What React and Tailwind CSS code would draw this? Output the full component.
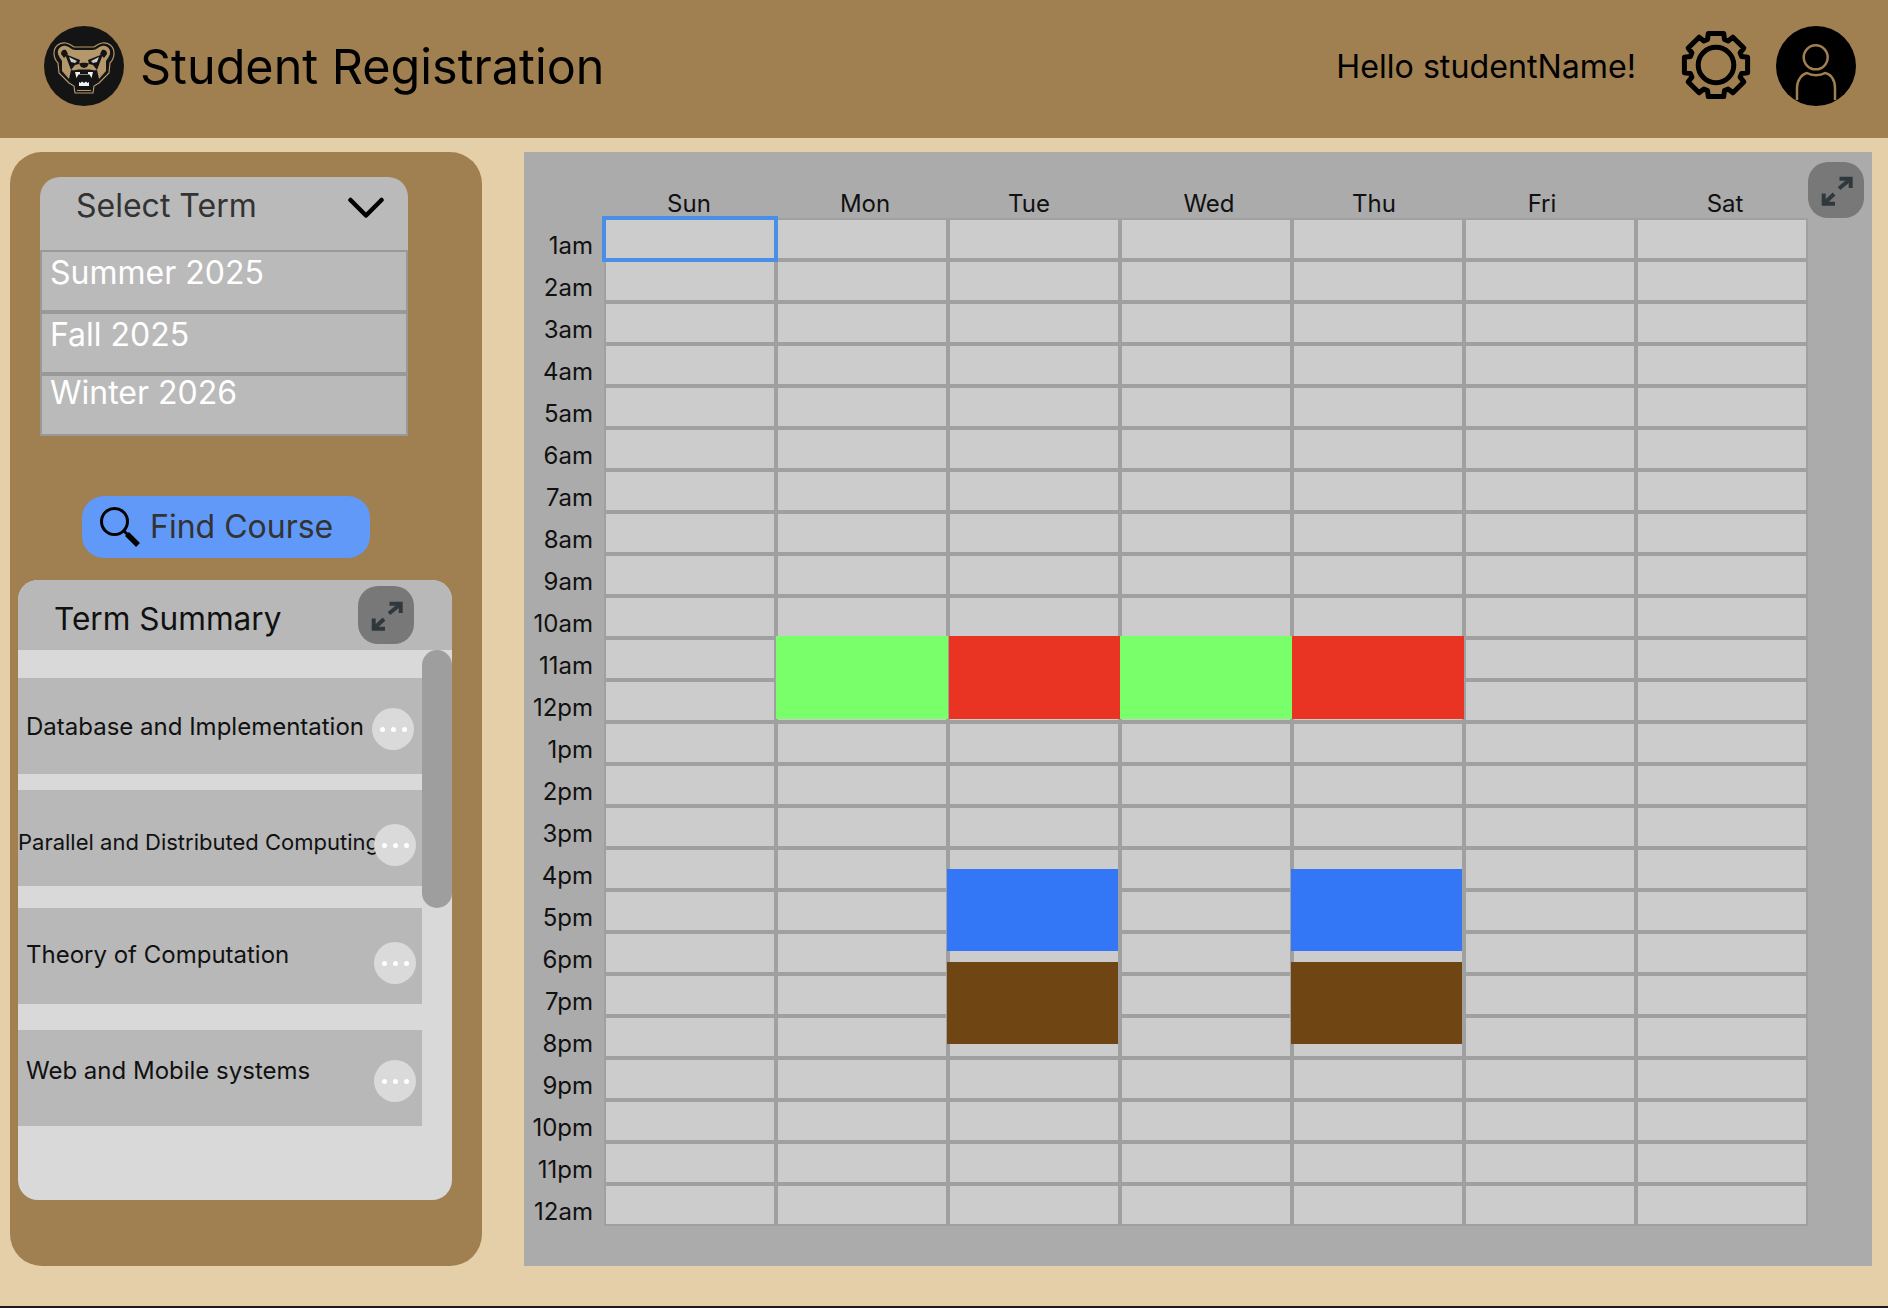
import React from 'react';

const days = [
  { name: 'Sun', cls: 'pr-[2px]' },
  { name: 'Mon', cls: 'pl-[6px]' },
  { name: 'Tue', cls: 'pr-[10px]' },
  { name: 'Wed', cls: 'pl-[6px]' },
  { name: 'Thu', cls: 'pr-[8px]' },
  { name: 'Fri', cls: 'pr-[16px]' },
  { name: 'Sat', cls: 'pl-[6px]' },
];

const hours = [
  '1am', '2am', '3am', '4am', '5am', '6am', '7am', '8am', '9am', '10am', '11am', '12pm',
  '1pm', '2pm', '3pm', '4pm', '5pm', '6pm', '7pm', '8pm', '9pm', '10pm', '11pm', '12am',
];

// scheduled classes sit on top of the grid
const events = [
  'left-[252px] top-[484px] w-[172px] h-[83px] bg-[#78ff6a]',
  'left-[425px] top-[484px] w-[171px] h-[83px] bg-[#ea3423]',
  'left-[596px] top-[484px] w-[172px] h-[83px] bg-[#78ff6a]',
  'left-[768px] top-[484px] w-[172px] h-[83px] bg-[#ea3423]',
  'left-[423px] top-[717px] w-[171px] h-[82px] bg-[#3377f7]',
  'left-[767px] top-[717px] w-[171px] h-[82px] bg-[#3377f7]',
  'left-[423px] top-[810px] w-[171px] h-[82px] bg-[#6f4613]',
  'left-[767px] top-[810px] w-[171px] h-[82px] bg-[#6f4613]',
];

const courses = [
  { name: 'Database and Implementation', row: 'pl-[8px] pr-[8px]', text: 'mt-[34px] text-[24px] leading-[30px]', dot: 'ml-auto mt-[30px]' },
  { name: 'Parallel and Distributed Computing', row: 'mt-[16px] pr-[6px]', text: 'mt-[38px] w-[359px] text-[22px] leading-[28px]', dot: '-ml-[3px] mt-[34px]' },
  { name: 'Theory of Computation', row: 'mt-[22px] pl-[8px] pr-[6px]', text: 'mt-[32px] text-[24px] leading-[30px]', dot: 'ml-auto mt-[34px]' },
  { name: 'Web and Mobile systems', row: 'mt-[26px] pl-[8px] pr-[6px]', text: 'mt-[26px] text-[24px] leading-[30px]', dot: 'ml-auto mt-[30px]' },
];

function gearPath() {
  const pts = [];
  for (let i = 0; i < 8; i++) {
    const a = (i * Math.PI) / 4 - Math.PI / 2;
    const at = (r, d) => {
      const x = 36 + r * Math.cos(a + d);
      const y = 36 + r * Math.sin(a + d);
      return `${x.toFixed(1)} ${y.toFixed(1)}`;
    };
    pts.push(at(27, -0.32), at(32.5, -0.24), at(32.5, 0.24), at(27, 0.32));
  }
  return `M${pts.join('L')}Z`;
}

function Gear() {
  return (
    <svg width="72" height="72" viewBox="0 0 72 72" fill="none" stroke="black" strokeWidth="5" strokeLinejoin="round">
      <path d={gearPath()} />
      <circle cx="36" cy="36" r="17.8" />
    </svg>
  );
}

function Avatar() {
  return (
    <svg width="80" height="80" viewBox="0 0 80 80" className="ml-[24px] rounded-full bg-black" fill="none" stroke="#a07f51" strokeWidth="2.5">
      <circle cx="39.7" cy="31.3" r="12" />
      <path d="M21 74V62C21 54 26 48 31 47C36 50 44 50 49 47C55 48 59 54 59 62V74" />
    </svg>
  );
}

function BearLogo() {
  return (
    <svg width="80" height="80" viewBox="0 0 80 80" className="shrink-0 rounded-full bg-[#141414]">
      <path d="M10 27C10 20 16 16 22 17C26 18 28 20 30 21L50 21C52 20 54 18 58 17C64 16 70 20 70 27C70 32 68 35 66 37L65 47L55 57L50 60L49 67L31 67L30 60L25 57L15 47L14 37C12 35 10 32 10 27Z" fill="#141414" stroke="#b4976a" strokeWidth="1.2" />
      {/* tan head with the snout running down to the mouth */}
      <path d="M14 28C13 23 17 19 22 20C26 21 28 24 31 24L49 24C52 24 54 21 58 20C63 19 67 23 66 28C65 31 63 33 62 35L62 45L55 53L53 44L47 45L40 44L33 45L27 44L25 53L18 45L18 35C17 33 15 31 14 28Z" fill="#b4976a" />
      <path d="M17 28C17 25 19 23 22 24L24 28L20 32Z" fill="#141414" />
      <path d="M63 28C63 25 61 23 58 24L56 28L60 32Z" fill="#141414" />
      {/* eye masks */}
      <path d="M21 28L36 34L35 38L31 39L27 44L24 36Z" fill="#141414" />
      <path d="M59 28L44 34L45 38L49 39L53 44L56 36Z" fill="#141414" />
      <path d="M25 31L33 35L31 37L27 36Z" fill="#c9ccc9" />
      <path d="M55 31L47 35L49 37L53 36Z" fill="#c9ccc9" />
      {/* nose */}
      <path d="M35 37.5C37 36.5 43 36.5 45 37.5L43 41L40 42L37 41Z" fill="#141414" />
      {/* mouth */}
      <path d="M28 45L34 43.5H46L52 45L51 53L46 62H34L29 53Z" fill="#141414" />
      <path d="M31 46H36V48H44V46H49L47.5 52L45.5 48.5H34.5L32.5 52Z" fill="#f2f2f2" />
      <path d="M35 60V56L36.5 57L38 55.5L40 57L42 55.5L43.5 57L45 56V60Z" fill="#f2f2f2" />
      <path d="M33 64.5H47" stroke="#b4976a" strokeWidth="1" />
    </svg>
  );
}

function ExpandIcon() {
  return (
    <svg width="34" height="34" viewBox="0 0 34 34" fill="none" stroke="#2f383c" strokeWidth="4">
      <path d="M20.5 5.7H31.7V15" />
      <path d="M31 6.5L20 15.5" />
      <path d="M4.7 20.5V30.7H16" />
      <path d="M5.5 30L15 21" />
    </svg>
  );
}

function App() {
  return (
    <div className="h-[1308px] w-[1888px] overflow-hidden border-b-2 border-[#1a1a1a] bg-[#e5cfa9] font-[Inter,sans-serif] text-black">
      {/* Header */}
      <header className="flex h-[138px] items-start bg-[#a07f51] pl-[44px] pr-[32px] pt-[26px]">
        <BearLogo />
        <h1 className="ml-[16px] mt-[11px] text-[48.5px] font-normal leading-[60px]">Student Registration</h1>
        <p className="ml-auto mt-[21px] text-[32.2px] leading-[40px]">Hello studentName!</p>
        <div className="ml-[44px] mt-[3px]">
          <Gear />
        </div>
        <Avatar />
      </header>

      <main className="flex pl-[10px] pt-[14px]">
        {/* Sidebar */}
        <aside className="h-[1114px] w-[472px] rounded-[32px] bg-[#a07f51] pt-[25px]">
          <div className="ml-[30px] w-[368px]">
            <div className="flex h-[73px] items-start justify-between rounded-t-[20px] bg-[#bababa] pl-[36px] pr-[24px] pt-[9px]">
              <span className="text-[32px] leading-[40px] text-[#333333]">Select Term</span>
              <svg width="36" height="22" viewBox="0 0 36 22" className="mt-[11px]" fill="none" stroke="black" strokeWidth="4.5" strokeLinecap="round" strokeLinejoin="round">
                <path d="M2.5 3L18 18.5L33.5 3" />
              </svg>
            </div>
            <div className="h-[62px] border-2 border-[#999999] bg-[#bababa] pl-[8px] pt-[1px] text-[32px] leading-[40px] text-white">Summer 2025</div>
            <div className="h-[62px] border-2 border-[#999999] bg-[#bababa] pl-[8px] pt-[1px] text-[32px] leading-[40px] text-white">Fall 2025</div>
            <div className="h-[62px] border-2 border-[#999999] bg-[#bababa] pl-[8px] pt-[1px] text-[32px] leading-[32px] text-white">Winter 2026</div>
          </div>

          <button className="ml-[72px] mt-[60px] flex h-[62px] w-[288px] items-center gap-[10px] rounded-[22px] bg-[#6199f8] pl-[18px] text-[32px] text-[#333333]">
            <svg width="40" height="40" viewBox="0 0 40 40" fill="none" stroke="black">
              <circle cx="14.5" cy="14.5" r="13" strokeWidth="3" />
              <path d="M24 24L28 28" strokeWidth="3" />
              <path d="M27 27L38 38" strokeWidth="5.5" />
            </svg>
            <span className="pb-[1px] leading-[40px]">Find Course</span>
          </button>

          {/* Term summary */}
          <section className="ml-[8px] mt-[22px] h-[620px] w-[434px] overflow-hidden rounded-[20px] bg-[#d9d9d9]">
            <div className="flex h-[70px] items-start justify-between bg-[#b8b8b8] pl-[36px] pr-[38px] pt-[6px]">
              <h2 className="pt-[11px] text-[31.6px] font-normal leading-[44px] text-[#111111]">Term Summary</h2>
              <button className="flex h-[58px] w-[56px] items-center justify-center rounded-[20px] bg-[#787878]">
                <ExpandIcon />
              </button>
            </div>
            <div className="relative pt-[28px]">
              {courses.map((c) => (
                <div key={c.name} className={`flex h-[96px] w-[404px] bg-[#b8b8b8] ${c.row}`}>
                  <p className={`shrink-0 overflow-hidden whitespace-nowrap text-[#111111] ${c.text}`}>{c.name}</p>
                  <span className={`flex size-[42px] shrink-0 items-center justify-center gap-[6px] rounded-full bg-[#dadada] ${c.dot}`}>
                    <i className="size-[5px] rounded-full bg-white" />
                    <i className="size-[5px] rounded-full bg-white" />
                    <i className="size-[5px] rounded-full bg-white" />
                  </span>
                </div>
              ))}
              <div className="absolute right-0 top-0 h-[258px] w-[30px] rounded-full bg-[#9e9e9e]" />
            </div>
          </section>
        </aside>

        {/* Calendar */}
        <section className="relative ml-[42px] h-[1114px] w-[1348px] bg-[#ababab]">
          <div className="grid grid-cols-[80px_repeat(7,172px)] grid-rows-[66px_repeat(24,42px)]">
            <div />
            {days.map((d) => (
              <div key={d.name} className={`flex items-end justify-center text-[24px] leading-[28px] text-[#111111] ${d.cls}`}>
                {d.name}
              </div>
            ))}
            {hours.map((h, row) => (
              <React.Fragment key={h + row}>
                <div className="flex items-end justify-end pb-[1px] pr-[11px] text-[24px] leading-[26px] text-[#111111]">{h}</div>
                {days.map((d, col) => (
                  <div
                    key={d.name}
                    className={
                      row === 0 && col === 0
                        ? 'relative z-10 border-2 border-[#a0a0a0] bg-[#cccccc] outline-4 -outline-offset-2 outline-[#4a8fe7]'
                        : 'border-2 border-[#a0a0a0] bg-[#cccccc]'
                    }
                  />
                ))}
              </React.Fragment>
            ))}
          </div>
          {events.map((cls) => (
            <div key={cls} className={`absolute z-20 ${cls}`} />
          ))}
          <button className="absolute right-[8px] top-[10px] flex size-[56px] items-center justify-center rounded-[20px] bg-[#787878]">
            <ExpandIcon />
          </button>
        </section>
      </main>
    </div>
  );
}

export default App;
